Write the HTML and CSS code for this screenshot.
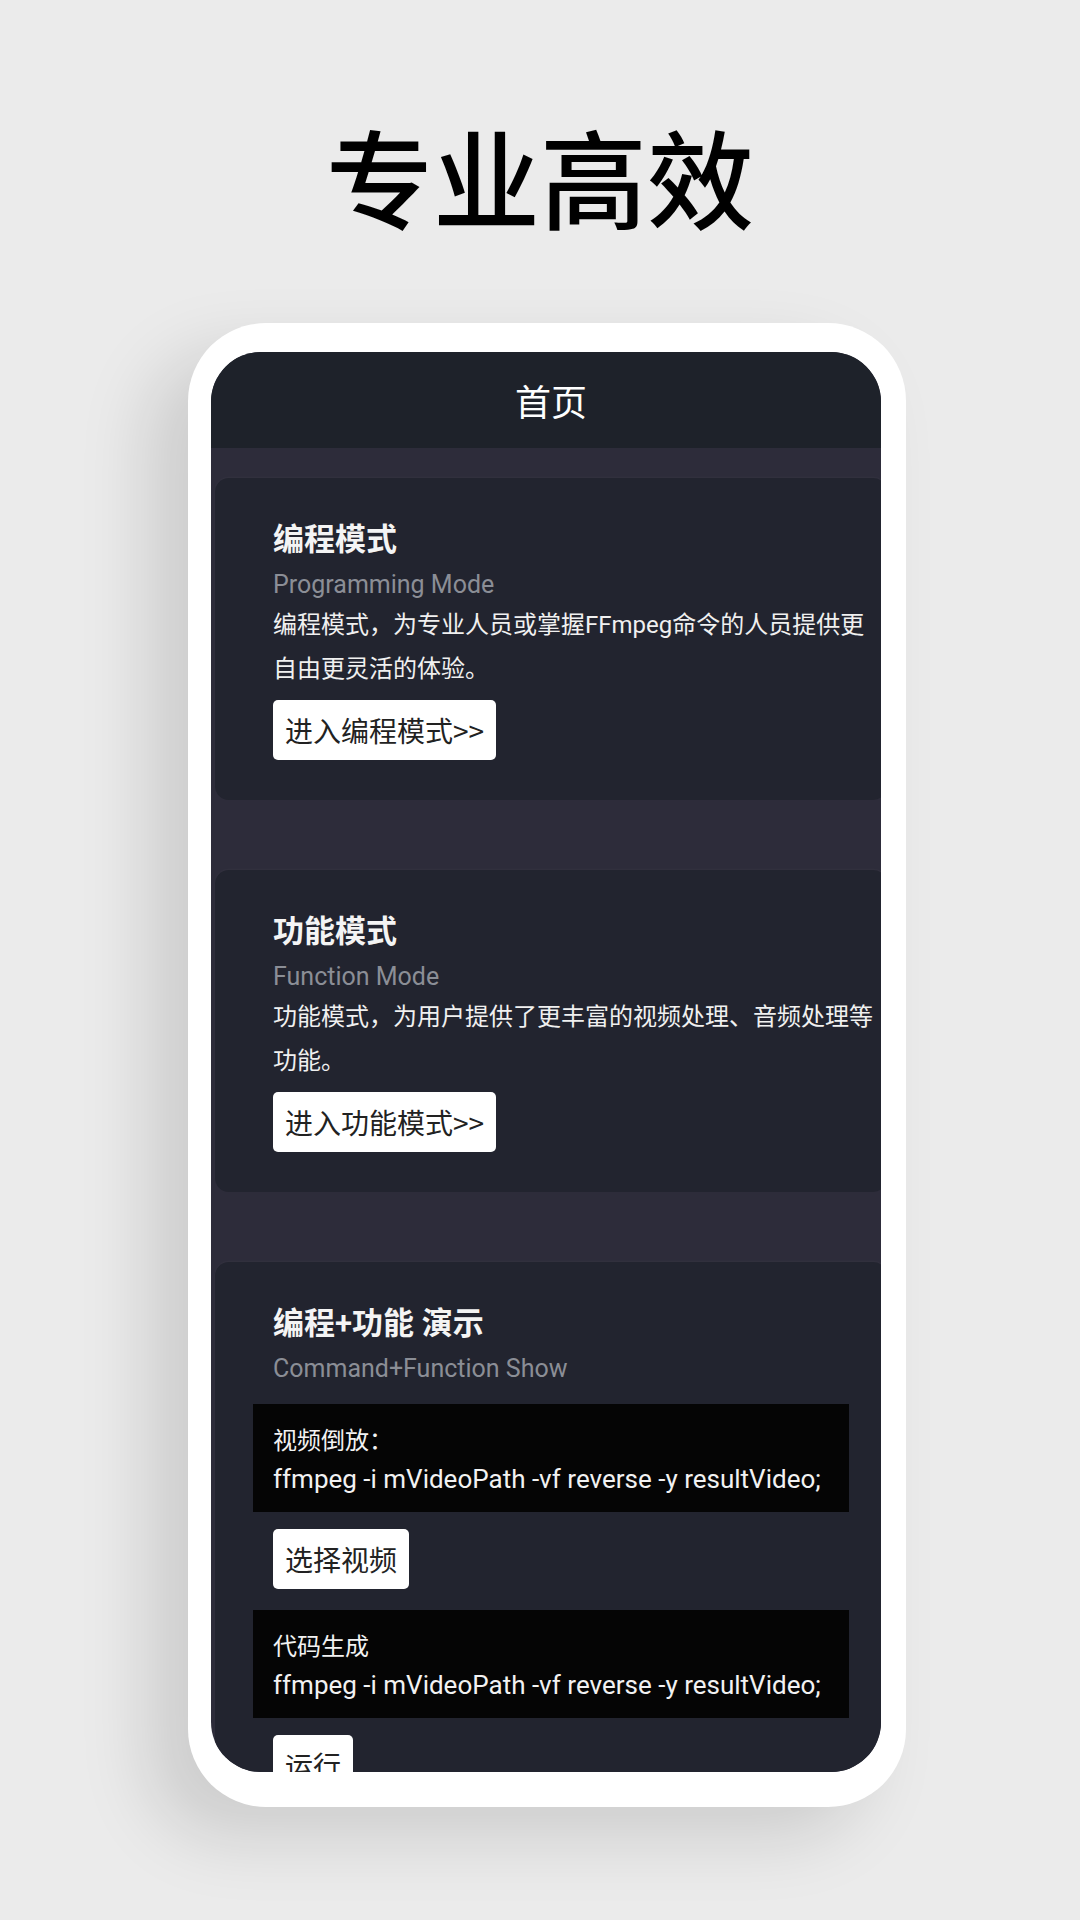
FILE: index.html
```html
<!DOCTYPE html>
<html lang="zh-CN">
<head>
<meta charset="utf-8">
<title>专业高效</title>
<link rel="stylesheet" href="styles.css">
</head>
<body>
<h1 class="headline">专业高效</h1>
<div class="phone">
  <div class="screen">
    <div class="app">
      <header class="appbar">首页</header>
      <main class="content">
        <section class="card">
          <h2 class="card-title">编程模式</h2>
          <p class="card-sub">Programming Mode</p>
          <p class="card-desc">编程模式，为专业人员或掌握FFmpeg命令的人员提供更自由更灵活的体验。</p>
          <button class="btn">进入编程模式&gt;&gt;</button>
        </section>
        <section class="card">
          <h2 class="card-title">功能模式</h2>
          <p class="card-sub">Function Mode</p>
          <p class="card-desc">功能模式，为用户提供了更丰富的视频处理、音频处理等功能。</p>
          <button class="btn">进入功能模式&gt;&gt;</button>
        </section>
        <section class="card">
          <h2 class="card-title">编程+功能 演示</h2>
          <p class="card-sub">Command+Function Show</p>
          <div class="code">
            <div class="code-label">视频倒放：</div>
            <div class="code-line">ffmpeg -i mVideoPath -vf reverse -y resultVideo;</div>
          </div>
          <button class="btn">选择视频</button>
          <div class="code">
            <div class="code-label">代码生成</div>
            <div class="code-line">ffmpeg -i mVideoPath -vf reverse -y resultVideo;</div>
          </div>
          <button class="btn">运行</button>
        </section>
      </main>
    </div>
  </div>
</div>
</body>
</html>
```

FILE: styles.css
```css
html, body {
  margin: 0;
  padding: 0;
}
body {
  width: 1080px;
  height: 1920px;
  overflow: hidden;
  background: #ebebeb;
  font-family: Roboto, "Noto Sans CJK SC", sans-serif;
}
.headline {
  margin: 0;
  padding-top: 121px;
  height: 108px;
  font-family: "Noto Sans CJK SC", sans-serif;
  font-size: 107px;
  line-height: 108px;
  font-weight: 500;
  color: #000;
  text-align: center;
}
.phone {
  box-sizing: border-box;
  margin: 94px 0 0 188px;
  width: 718px;
  height: 1484px;
  padding: 29px 25px 35px 23px;
  background: #fff;
  border-radius: 78px;
  box-shadow: -40px 30px 70px rgba(0, 0, 0, 0.13);
}
.screen {
  width: 670px;
  height: 1420px;
  border-radius: 50px;
  overflow: hidden;
  background: #2d2c3a;
}
.app {
  width: 680px;
}
.appbar {
  height: 96px;
  background: #1e222a;
  color: #fff;
  font-family: "Noto Sans CJK SC", sans-serif;
  font-size: 36px;
  line-height: 96px;
  text-align: center;
}
.content {
  padding: 30px 4px 0;
  display: flex;
  flex-direction: column;
  gap: 70px;
}
.card {
  background: #22242f;
  border-radius: 14px;
  padding: 42px 4px 40px 58px;
  display: flex;
  flex-direction: column;
  align-items: flex-start;
  box-shadow: 0 -1px 2px rgba(255, 255, 255, 0.03);
}
.card-title {
  margin: 0;
  font-size: 31px;
  line-height: 40px;
  font-weight: 600;
  color: #f4f4f4;
}
.card-sub {
  margin: 7px 0 0;
  font-size: 25px;
  line-height: 36px;
  color: #8b8e96;
}
.card-desc {
  margin: 0;
  font-size: 24px;
  line-height: 44px;
  color: #f0f0f0;
}
.btn {
  margin-top: 9px;
  height: 60px;
  padding: 0 12px;
  border: none;
  border-radius: 5px;
  background: #fff;
  color: #222;
  font-family: "Noto Sans CJK SC", sans-serif;
  font-size: 28px;
  line-height: 60px;
}
.code {
  align-self: stretch;
  margin: 17px 34px 0 -20px;
  padding: 18px 20px 14px;
  background: #050505;
  color: #f2f2f2;
}
.code-label {
  font-size: 24px;
  line-height: 38px;
}
.code-line {
  font-size: 26px;
  line-height: 38px;
  white-space: nowrap;
}
.code + .btn {
  margin-top: 17px;
}
.btn + .code {
  margin-top: 21px;
}
```
